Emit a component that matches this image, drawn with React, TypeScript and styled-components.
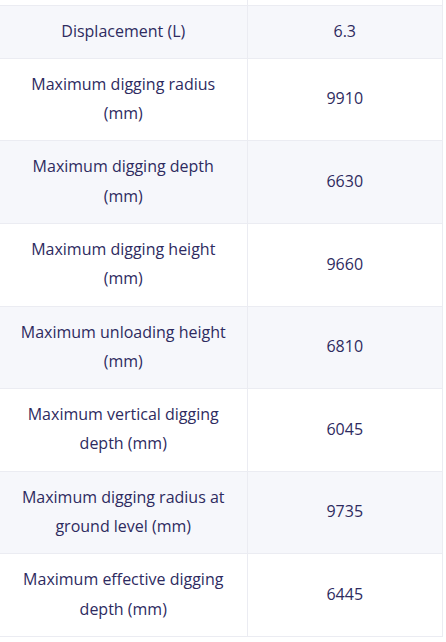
import React from "react";
import styled, { createGlobalStyle } from "styled-components";

const Global = createGlobalStyle`
  html, body { margin: 0; padding: 0; background: #ffffff; }
  body { font-family: "Open Sans", "Noto Sans", sans-serif; }
`;

const Frame = styled.div`
  width: 446px;
  height: 642px;
  overflow: hidden;
`;

const Table = styled.table`
  width: 443px;
  border-collapse: collapse;
  table-layout: fixed;
  font-size: 16px;
  color: #2e2b5f;
`;

const Row = styled.tr<{ $striped: boolean }>`
  background: ${(p) => (p.$striped ? "#f6f7fb" : "#ffffff")};
`;

const Spacer = styled.tr`
  height: 5px;
  background: #ffffff;
`;

const Cell = styled.td`
  padding: 11px 14px 12px;
  line-height: 29.3px;
  text-align: center;
  vertical-align: middle;
  border-bottom: 1px solid #ebecf2;
  border-right: 1px solid #ebecf2;
  box-sizing: border-box;
`;

const SpacerCell = styled.td`
  padding: 0;
  height: 4px;
  border-bottom: 1px solid #ebecf2;
  border-right: 1px solid #ebecf2;
`;

const rows: [string, string][] = [
  ["Displacement (L)", "6.3"],
  ["Maximum digging radius (mm)", "9910"],
  ["Maximum digging depth (mm)", "6630"],
  ["Maximum digging height (mm)", "9660"],
  ["Maximum unloading height (mm)", "6810"],
  ["Maximum vertical digging depth (mm)", "6045"],
  ["Maximum digging radius at ground level (mm)", "9735"],
  ["Maximum effective digging depth (mm)", "6445"],
];

export default function App() {
  return (
    <Frame>
      <Global />
      <Table>
        <colgroup>
          <col style={{ width: 247 }} />
          <col />
        </colgroup>
        <tbody>
          <Spacer>
            <SpacerCell />
            <SpacerCell />
          </Spacer>
          {rows.map(([label, value], i) => (
            <Row key={label} $striped={i % 2 === 0}>
              <Cell>{label}</Cell>
              <Cell>{value}</Cell>
            </Row>
          ))}
        </tbody>
      </Table>
    </Frame>
  );
}
